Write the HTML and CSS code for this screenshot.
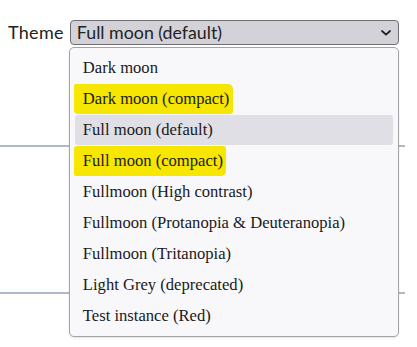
FILE: index.html
```html
<!DOCTYPE html>
<html>
<head>
  <link rel="stylesheet" href="styles.css">
</head>
<body>
  <div class="page">
    <div class="field">
      <label class="field-label" for="theme">Theme</label>
      <div class="select-wrap">
        <div class="select" id="theme">
          <span class="select-value">Full moon (default)</span>
          <svg class="chevron" width="10" height="6" viewBox="0 0 10 6">
            <path d="M1 1 L5 4.6 L9 1" fill="none" stroke="#222" stroke-width="1.8" stroke-linecap="round"/>
          </svg>
        </div>

        <ul class="menu">
          <li class="option">Dark moon</li>
          <li class="option"><mark class="marker">Dark moon (compact)</mark></li>
          <li class="option selected">Full moon (default)</li>
          <li class="option"><mark class="marker marker-alt">Full moon (compact)</mark></li>
          <li class="option">Fullmoon (High contrast)</li>
          <li class="option">Fullmoon (Protanopia &amp; Deuteranopia)</li>
          <li class="option">Fullmoon (Tritanopia)</li>
          <li class="option">Light Grey (deprecated)</li>
          <li class="option">Test instance (Red)</li>
        </ul>
      </div>
    </div>

    <hr class="rule rule-first">
    <hr class="rule rule-second">
  </div>
</body>
</html>
```

FILE: styles.css
```css
body {
  margin: 0;
  background: #ffffff;
  font-family: Lato, "Open Sans", sans-serif;
  color: #1e1e1e;
}
.page {
  box-sizing: border-box;
  width: 405px;
  min-height: 347px;
  padding-top: 20px;
  padding-bottom: 20px;
}
.field {
  display: flex;
  align-items: flex-start;
  gap: 6px;
  padding-left: 8px;
}
.field-label {
  font-size: 18px;
  line-height: 25px;
  color: #222;
  letter-spacing: 0.3px;
}
.select-wrap {
  position: relative;
}
.select {
  box-sizing: border-box;
  width: 329px;
  height: 25px;
  display: flex;
  align-items: center;
  justify-content: space-between;
  padding: 0 7px 0 6px;
  border: 1px solid #6d6d72;
  border-radius: 4px;
  background: #d2d2d8;
  font-size: 17.8px;
  color: #222;
}
.select-value {
  line-height: 23px;
}
.chevron {
  display: block;
}
.menu {
  position: absolute;
  top: 27px;
  left: -1px;
  z-index: 2;
  box-sizing: border-box;
  width: 330px;
  margin: 0;
  padding: 5px;
  list-style: none;
  background: #f8f8fa;
  border: 1px solid #a4a4a8;
  border-radius: 5px;
  box-shadow: 0 1px 2px rgba(0, 0, 0, 0.12);
}
.option {
  height: 30px;
  line-height: 30px;
  padding-left: 8px;
  margin-bottom: 1px;
  border-radius: 3px;
  white-space: nowrap;
  font-family: "Liberation Serif", "Times New Roman", serif;
  font-size: 16.6px;
  color: #1a1a1a;
}
.option:last-child {
  margin-bottom: 0;
}
.option.selected {
  background: #dfdfe5;
}
.marker {
  display: inline-block;
  line-height: 30px;
  margin-left: -9px;
  padding: 0 4px 0 9px;
  background: #f6e600;
  color: #1a1a1a;
  border-radius: 2px 5px 3px 4px;
}
.marker-alt {
  padding-right: 3px;
  border-radius: 3px 3px 5px 2px;
}
.rule {
  border: none;
  height: 2px;
  margin: 0;
  background: #aebaca;
}
.rule-first {
  margin-top: 100px;
}
.rule-second {
  margin-top: 145px;
}
```
